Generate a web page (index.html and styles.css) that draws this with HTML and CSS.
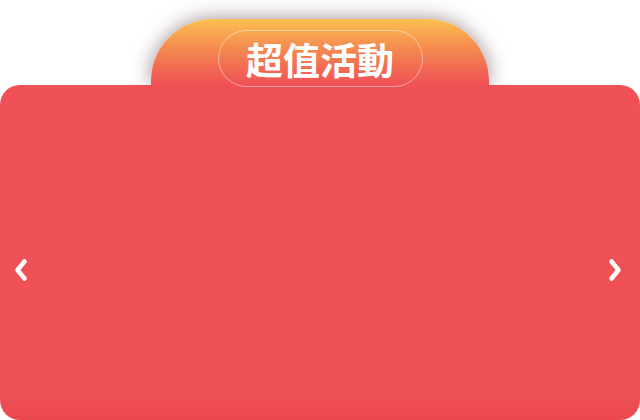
FILE: index.html
```html
<!DOCTYPE html>
<html lang="zh-Hant">
<head>
<meta charset="utf-8">
<link rel="stylesheet" href="styles.css">
</head>
<body>
<div class="promo">
  <div class="tab">
    <div class="pill">超值活動</div>
  </div>
  <div class="panel">
    <button class="nav">
      <svg width="16" height="24" viewBox="0 0 16 24"><path d="M11.5 3.5 L4.5 12 L11.5 20.5" fill="none" stroke="#fff" stroke-width="4.5" stroke-linecap="round" stroke-linejoin="round"/></svg>
    </button>
    <button class="nav">
      <svg width="16" height="24" viewBox="0 0 16 24"><path d="M4.5 3.5 L11.5 12 L4.5 20.5" fill="none" stroke="#fff" stroke-width="4.5" stroke-linecap="round" stroke-linejoin="round"/></svg>
    </button>
  </div>
</div>
</body>
</html>
```
FILE: styles.css
```css
html, body {
  margin: 0;
  padding: 0;
  background: #fff;
}
.promo {
  width: 640px;
  height: 420px;
  padding-top: 19px;
  box-sizing: border-box;
  display: flex;
  flex-direction: column;
  align-items: center;
  overflow: hidden;
}
.tab {
  width: 338px;
  height: 66px;
  border-radius: 62px 62px 0 0;
  background: linear-gradient(180deg, #fbc04f 0%, #f5894f 45%, #ef5156 100%);
  box-shadow: 0 0 20px rgba(60, 20, 30, 0.5);
  display: flex;
  justify-content: center;
  box-sizing: border-box;
  padding-top: 11px;
}
.pill {
  position: relative;
  z-index: 2;
  width: 205px;
  height: 57px;
  box-sizing: border-box;
  border: 1px solid rgba(255, 255, 255, 0.45);
  border-radius: 30px;
  color: #fff;
  font-family: "Noto Sans CJK TC", "Noto Sans CJK SC", sans-serif;
  font-weight: 700;
  font-size: 37px;
  display: flex;
  align-items: center;
  justify-content: center;
}
.panel {
  position: relative;
  z-index: 1;
  width: 640px;
  height: 335px;
  flex: none;
  border-radius: 20px;
  background: linear-gradient(180deg, #ef5156 0%, #ef5156 92%, #ea484e 100%);
  display: flex;
  align-items: center;
  justify-content: space-between;
  padding: 0 17px 0 13px;
  box-sizing: border-box;
}
.nav {
  background: none;
  border: 0;
  padding: 0;
  width: 16px;
  height: 24px;
  display: flex;
  margin-top: 34px;
}
```
